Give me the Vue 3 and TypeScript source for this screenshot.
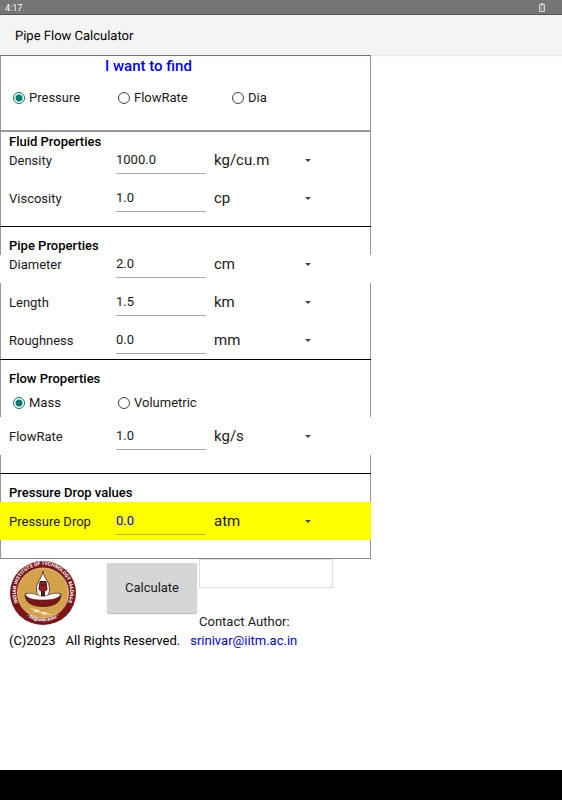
<script setup lang="ts">
import { reactive, ref } from 'vue'

interface Field {
  id: string
  label: string
  value: string
  unit: string
  units: string[]
  kind?: 'bare' | 'result'
}

interface Section {
  title: string
  fields: Field[]
  modes?: string[]
}

const target = ref('Pressure')
const flowMode = ref('Mass')
const note = ref('')

const sections = reactive<Section[]>([
  {
    title: 'Fluid Properties',
    fields: [
      { id: 'density', label: 'Density', value: '1000.0', unit: 'kg/cu.m', units: ['kg/cu.m', 'g/cc'] },
      { id: 'viscosity', label: 'Viscosity', value: '1.0', unit: 'cp', units: ['cp', 'Pa.s'] },
    ],
  },
  {
    title: 'Pipe Properties',
    fields: [
      { id: 'diameter', label: 'Diameter', value: '2.0', unit: 'cm', units: ['cm', 'm', 'in'], kind: 'bare' },
      { id: 'length', label: 'Length', value: '1.5', unit: 'km', units: ['km', 'm', 'ft'] },
      { id: 'roughness', label: 'Roughness', value: '0.0', unit: 'mm', units: ['mm', 'cm'] },
    ],
  },
  {
    title: 'Flow Properties',
    modes: ['Mass', 'Volumetric'],
    fields: [
      { id: 'flowrate', label: 'FlowRate', value: '1.0', unit: 'kg/s', units: ['kg/s', 'kg/h'], kind: 'bare' },
    ],
  },
  {
    title: 'Pressure Drop values',
    fields: [
      { id: 'drop', label: 'Pressure Drop', value: '0.0', unit: 'atm', units: ['atm', 'bar', 'kPa'], kind: 'result' },
    ],
  },
])
</script>

<template>
  <div class="screen">
    <div class="status">
      <span>4:17</span>
      <svg class="battery" viewBox="0 0 6 9" aria-hidden="true">
        <path d="M2 0h2v1h-2z" fill="#ddd" />
        <path d="M0.500 1.500h5v7h-5z" fill="#8c8c8c" stroke="#d8d8d8" />
      </svg>
    </div>
    <header class="appbar"><h1>Pipe Flow Calculator</h1></header>

    <main>
      <form class="form" @submit.prevent>
        <section class="find">
          <h2 class="find-title">I want to find</h2>
          <div class="radios">
            <label v-for="t in ['Pressure', 'FlowRate', 'Dia']" :key="t">
              <input v-model="target" type="radio" name="target" :value="t" />{{ t }}
            </label>
          </div>
        </section>

        <section
          v-for="(s, i) in sections"
          :key="s.title"
          class="group"
          :class="{ first: i === 0, roomy: i > 1 }"
        >
          <h2 class="title">{{ s.title }}</h2>
          <div v-if="s.modes" class="radios modes">
            <label v-for="m in s.modes" :key="m">
              <input v-model="flowMode" type="radio" name="mode" :value="m" />{{ m }}
            </label>
          </div>
          <div v-for="f in s.fields" :key="f.id" class="row" :class="f.kind">
            <label :for="f.id">{{ f.label }}</label>
            <input :id="f.id" v-model="f.value" class="field" type="text" inputmode="decimal" />
            <div class="unit">
              <select v-model="f.unit" :aria-label="f.label + ' unit'">
                <option v-for="u in f.units" :key="u">{{ u }}</option>
              </select>
              <svg class="caret" viewBox="0 0 6 3" aria-hidden="true"><path d="M0 0h6l-3 3z" /></svg>
            </div>
          </div>
          <div class="tail"></div>
        </section>
      </form>

      <div class="footer">
        <svg class="logo" viewBox="0 0 66 64" role="img" aria-label="Indian Institute of Technology Madras">
          <defs>
            <path id="ring-top" d="M14.600 50.800A27 27 0 1 1 51.400 50.800" />
            <path id="ring-bottom" d="M15 54.200A29 29 0 0 0 51 54.200" />
          </defs>
          <ellipse cx="33" cy="32" rx="33" ry="32" fill="#7b1518" />
          <ellipse cx="33" cy="32" rx="25.500" ry="25" fill="#d5a24c" stroke="#ecd2a2" stroke-width="0.800" />
          <text class="ring"><textPath href="#ring-top" startOffset="50%" text-anchor="middle">INDIAN INSTITUTE OF TECHNOLOGY MADRAS</textPath></text>
          <text class="ring motto"><textPath href="#ring-bottom" startOffset="50%" text-anchor="middle">• सिद्धिर्भवति कर्मजा •</textPath></text>
          <path d="M33 10C32 18 26.500 20 26.500 28c0 5 2 8 6.500 9 4.500-1 6.500-4 6.500-9C39.500 20 34 18 33 10z" fill="#fff" stroke="#472018" stroke-width="0.800" />
          <path d="M30 20.500h6l1 8-2.500 2v5h-3v-5l-2.500-2z" fill="#9d1b20" stroke="#2c1716" stroke-width="1" />
          <path d="M31 24h4M33 30v6" stroke="#2c1716" stroke-width="1" />
          <path d="M15 33C20 31.500 25 34 29 35.500h8c4-1.500 9-4 14-2.500C51 42 43 45.500 33 45.500S15 42 15 33z" fill="#7b1518" stroke="#3c1511" stroke-width="0.800" />
          <path d="M15 33C20 31 25 33 29 34.500c3 1 5 1 8 0C41 33 46 31 51 33c-2 5-10 6-18 6s-16-1-18-6z" fill="#fff" stroke="#3c1511" stroke-width="0.500" />
          <path d="M20 47l10 2.500-2 1 10 1-3 1 9 1-13 0 2-1.500-10-1.500 2-1z" fill="#fff4ce" />
        </svg>
        <button class="calc" type="button">Calculate</button>
        <div class="contact">
          <input v-model="note" class="note" type="text" aria-label="Result" />
          <span>Contact Author:</span>
        </div>
      </div>
      <p class="copy">
        <span>(C)2023</span>
        <span>All Rights Reserved.</span>
        <a href="mailto:srinivar@iitm.ac.in">srinivar@iitm.ac.in</a>
      </p>
    </main>
    <div class="navbar"></div>
  </div>
</template>

<style>
body {
  margin: 0;
  background: #fff;
}
</style>

<style scoped>
.screen {
  display: flex;
  flex-direction: column;
  min-height: 100vh;
  font-family: Roboto, 'Noto Sans', sans-serif;
  font-size: 13px;
  line-height: 18px;
  color: #1a1a1a;
}
.screen * {
  box-sizing: border-box;
}
h1,
h2,
p {
  margin: 0;
  color: #000;
}
input,
select,
button {
  font: inherit;
  color: inherit;
}
.status {
  display: flex;
  align-items: center;
  justify-content: space-between;
  height: 15px;
  padding: 1px 17px 0 5px;
  background: #757575;
  border-bottom: 1px solid #555;
  color: #fff;
  font-size: 9px;
}
.battery {
  width: 6px;
  height: 9px;
}
.appbar {
  display: flex;
  align-items: center;
  height: 40px;
  padding: 4px 15px 0;
  background: #f4f4f4;
  box-shadow: 0 1px 1px #e8e8e8;
}
.appbar h1 {
  font-size: 13px;
  font-weight: 400;
  text-rendering: geometricPrecision;
}
main {
  flex: 1;
}
.form {
  width: 66%;
  border-top: 1px solid #777;
  border-bottom: 1px solid #888;
}
.find {
  height: 74px;
  border: solid #999;
  border-width: 0 1px;
}
.find-title {
  padding-left: 104px;
  font-size: 15px;
  line-height: 20px;
  font-weight: 500;
  color: #00f;
}
.radios {
  display: grid;
  grid-template-columns: 105px 114px 1fr;
  align-items: center;
  height: 44px;
  padding-left: 12px;
}
.radios label {
  display: flex;
  align-items: center;
  gap: 4px;
}
.radios input {
  appearance: none;
  width: 12px;
  height: 12px;
  margin: 0;
  border: 1px solid #444;
  border-radius: 50%;
}
.radios input:checked {
  border-color: #00796b;
  background: radial-gradient(circle, #00796b 3px, transparent 4px);
}
.modes {
  height: 29px;
  border: solid #999;
  border-width: 0 1px;
}
.group {
  border-top: 1px solid #000;
}
.group.first {
  border-top: 2px solid #999;
}
.title {
  padding: 9px 8px 0;
  border: solid #999;
  border-width: 0 1px;
  font-size: 13px;
  line-height: 19px;
  font-weight: 500;
}
.first .title {
  padding-top: 0;
}
.row {
  display: grid;
  grid-template-columns: 107px 90px 108px;
  align-items: start;
  padding: 10px 8px 5px;
  border: solid #999;
  border-width: 0 1px;
}
.row label {
  line-height: 20px;
}
.title + .row {
  padding-top: 0;
}
.row.bare {
  border-color: transparent;
}
.title + .row.result {
  padding-top: 10px;
  background: #ff0;
  border-color: #ff0;
}
.field {
  width: 100%;
  height: 23px;
  padding: 0 0 5px;
  border: 0;
  border-bottom: 1px solid #aaa;
  background: transparent;
  line-height: 17px;
}
.result .field {
  color: #00f;
  border-color: #b5b500;
}
.unit {
  display: grid;
  align-items: center;
  padding-left: 8px;
}
.unit select {
  grid-area: 1 / 1;
  appearance: none;
  width: 100%;
  height: 18px;
  padding: 0;
  border: 0;
  background: transparent;
  font-size: 15px;
  line-height: 18px;
}
.caret {
  grid-area: 1 / 1;
  justify-self: end;
  width: 6px;
  height: 3px;
  margin-right: 3px;
  fill: #444;
  pointer-events: none;
}
.tail {
  border: solid #999;
  border-width: 0 1px;
}
.first .tail {
  height: 9px;
}
.roomy .tail {
  height: 18px;
}
.roomy .row {
  min-height: 38px;
}
.footer {
  display: grid;
  grid-template-columns: 97px 90px 136px;
  align-items: start;
  padding-left: 10px;
}
.logo {
  width: 66px;
  height: 64px;
  margin-top: 2px;
}
.ring {
  font-size: 5px;
  font-weight: 700;
  fill: #fff;
}
.motto {
  font-size: 4px;
}
.calc {
  height: 50px;
  margin-top: 4px;
  padding: 0;
  border: 0;
  border-radius: 1px;
  background: #d5d7d6;
  box-shadow: 0 1px 1px #bbb;
}
.contact {
  display: flex;
  flex-direction: column;
  gap: 25px;
  padding-left: 2px;
}
.note {
  width: 100%;
  height: 29px;
  border: 1px solid #ddd;
  background: #fff;
}
.copy {
  display: flex;
  gap: 10px;
  padding-left: 9px;
  line-height: 20px;
}
a {
  color: #00f;
  text-decoration: none;
}
.navbar {
  height: 30px;
  background: #000;
}
</style>
